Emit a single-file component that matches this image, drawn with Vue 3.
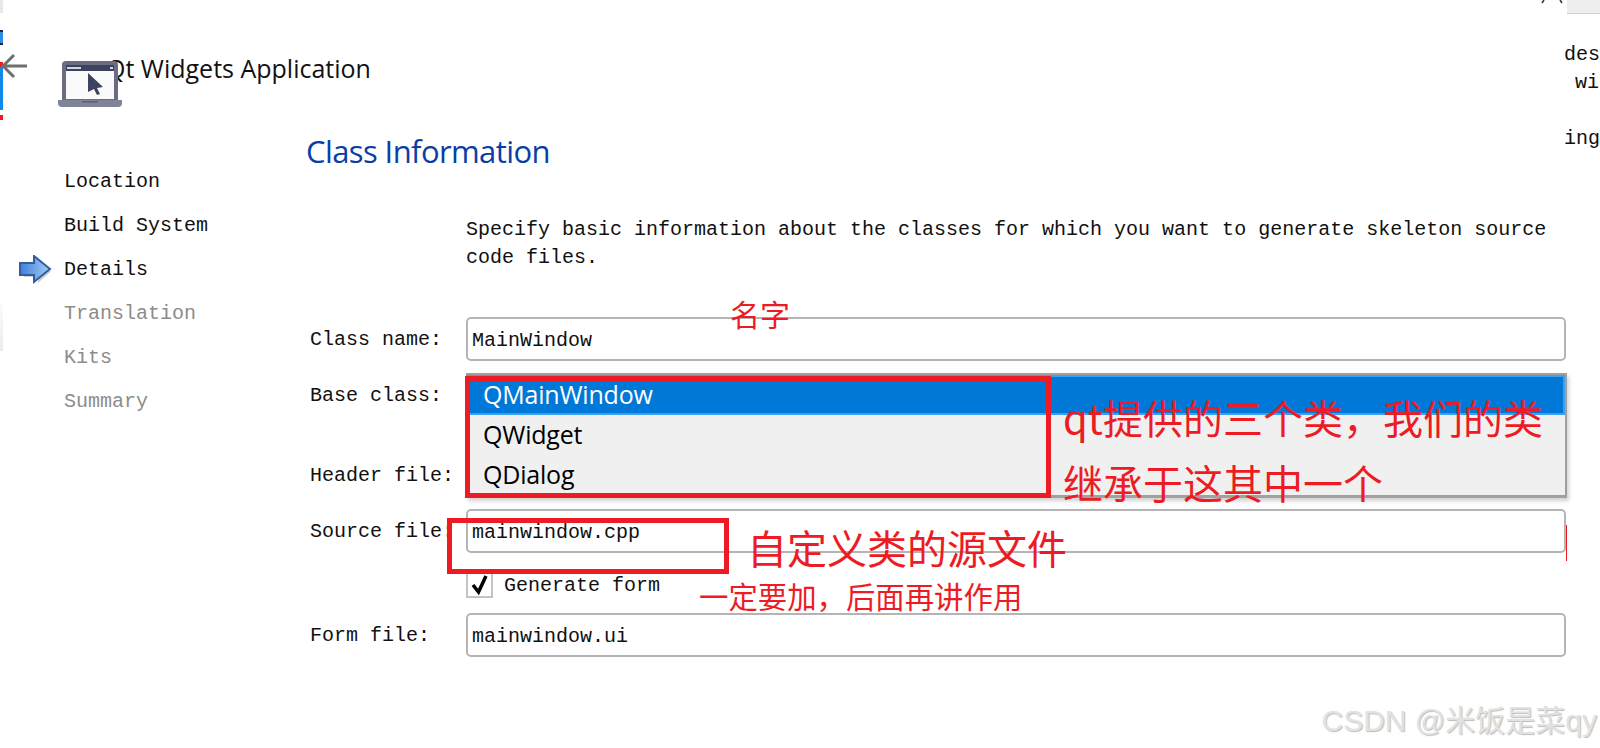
<script setup>
const steps = [
  { label: 'Location', state: 'done' },
  { label: 'Build System', state: 'done' },
  { label: 'Details', state: 'current' },
  { label: 'Translation', state: 'todo' },
  { label: 'Kits', state: 'todo' },
  { label: 'Summary', state: 'todo' },
]
const options = ['QMainWindow', 'QWidget', 'QDialog']
</script>

<template>
  <div class="page">
    <div class="edge-left">
      <i class="edge-gray"></i>
      <i class="edge-dark"></i>
      <i class="edge-blue"></i>
      <i class="edge-box"></i>
    </div>
    <div class="edge-right">
      <svg class="edge-ticks" width="22" height="4" viewBox="0 0 22 4" fill="none" stroke="#333" stroke-width="1.500">
        <path d="M1 3L3 0M19 0L21 3" />
      </svg>
      <i class="edge-bar"></i>
      <span class="edge-text t1">des</span>
      <span class="edge-text t2">wi</span>
      <span class="edge-text t3">ing</span>
    </div>
    <svg class="back" width="26" height="26" viewBox="0 0 26 26" fill="none" stroke="#6e6e6e" stroke-width="3">
      <path d="M2 13H26M13 2L2 13L13 24" />
    </svg>

    <header class="head">
      <h1 class="app-title">Qt Widgets Application</h1>
      <svg class="laptop" width="64" height="46" viewBox="0 0 64 46">
        <path d="M8 0H56a4 4 0 0 1 4 4V40H4V4a4 4 0 0 1 4-4Z" fill="#686d81" />
        <path d="M0 39H64V42a4 4 0 0 1-4 4H4a4 4 0 0 1-4-4Z" fill="#7f8397" />
        <rect x="8" y="5" width="48" height="33" fill="#fafafa" />
        <rect x="8" y="4" width="48" height="6" fill="#3d4260" />
        <rect x="9" y="6" width="14" height="2" fill="#d5d7de" />
        <rect x="52" y="6" width="3" height="2" fill="#d5d7de" />
        <path d="M30 12L45 26L39 27L42 33L39 34L36 28L30 31Z" fill="#3d4260" />
        <rect x="24" y="40" width="16" height="1.500" fill="#5d6176" />
      </svg>
    </header>

    <div class="body">
      <nav class="steps">
        <div v-for="s in steps" :key="s.label" class="step" :class="s.state">
          <svg v-if="s.state === 'current'" class="step-arrow" width="34" height="30" viewBox="0 0 34 30">
            <defs>
              <linearGradient id="arrowFill" x1="0" y1="0" x2="1" y2="0">
                <stop offset="0" stop-color="#3f80d8" />
                <stop offset="1" stop-color="#a6cbf5" />
              </linearGradient>
            </defs>
            <path d="M3 9H17V3L30 14.500L17 26V20H3Z" fill="#cfcfcf" transform="translate(2 2)" />
            <path d="M1 8H15V1L31 14L15 27V20H1Z" fill="url(#arrowFill)" stroke="#2f5f9f" stroke-width="2" />
          </svg>
          {{ s.label }}
        </div>
      </nav>

      <main class="content">
        <h2 class="section">Class Information</h2>
        <p class="intro">Specify basic information about the classes for which you want to generate skeleton source code files.</p>

        <div class="form">
          <label class="lbl r-name">Class name:</label>
          <div class="field r-name">MainWindow</div>

          <label class="lbl r-base">Base class:</label>

          <label class="lbl r-header">Header file:</label>

          <label class="lbl r-source">Source file:</label>
          <div class="field r-source">mainwindow.cpp</div>

          <div class="check-row r-check">
            <span class="check">
              <svg width="20" height="20" viewBox="0 0 20 20" fill="none" stroke="#000" stroke-width="3.500">
                <path d="M3 10L8.500 17L16 1" />
              </svg>
            </span>
            <span>Generate form</span>
          </div>

          <label class="lbl r-form">Form file:</label>
          <div class="field r-form">mainwindow.ui</div>

          <div class="popup">
            <div
              v-for="(o, i) in options"
              :key="o"
              class="opt"
              :class="{ sel: i === 0 }"
            >{{ o }}</div>
          </div>
        </div>
      </main>
    </div>

    <div class="note n-name">名字</div>
    <div class="note n-qt">qt提供的三个类，我们的类</div>
    <div class="note n-inherit">继承于这其中一个</div>
    <div class="note n-src">自定义类的源文件</div>
    <div class="note n-form">一定要加，后面再讲作用</div>
    <div class="mark m-classes"></div>
    <div class="mark m-source"></div>
    <i class="red-tick"></i>

    <div class="watermark">CSDN @米饭是菜qy</div>
  </div>
</template>

<style>
html, body { margin: 0; background: #fff; }
</style>

<style scoped>
.page {
  position: relative;
  width: 1600px;
  height: 748px;
  overflow: hidden;
  background: #fff;
  font-family: "Liberation Mono", "Noto Sans CJK SC", monospace;
  font-size: 20px;
  color: #111;
}

.head {
  position: relative;
  height: 130px;
  padding-left: 58px;
  box-sizing: border-box;
  display: flex;
  align-items: flex-start;
}
.app-title {
  margin: 50px 0 0 48px;
  font: 400 25px/36px "Open Sans", sans-serif;
  color: #111;
}
.laptop { position: absolute; left: 58px; top: 61px; }

.body { display: flex; }
.steps {
  width: 306px;
  flex: none;
  box-sizing: border-box;
  padding: 30px 0 0 64px;
}
.step {
  position: relative;
  height: 44px;
  line-height: 44px;
}
.step.todo { color: #8c8c8c; }
.step-arrow { position: absolute; left: -45px; top: 7px; }

.content { flex: 1; min-width: 0; padding-right: 34px; }
.section {
  margin: 0;
  font: 400 31px/42px "Open Sans", sans-serif;
  color: #0a3ea6;
  letter-spacing: -0.6px;
}
.intro {
  margin: 44px 0 0 160px;
  width: 1090px;
  line-height: 28px;
}

.form {
  position: relative;
  margin-top: 45px;
  display: grid;
  grid-template-columns: 160px 1fr;
  grid-template-rows: 44px 57px 80px 55px 60px 44px;
}
.lbl {
  grid-column: 1;
  align-self: end;
  padding-left: 4px;
  padding-top: 2px;
  box-sizing: border-box;
  height: 44px;
  line-height: 42px;
  white-space: pre;
}
.lbl.r-base, .lbl.r-header { padding-top: 1px; }
.r-name { grid-row: 1; }
.r-base { grid-row: 2; }
.r-header { grid-row: 3; }
.r-source { grid-row: 4; }
.r-check { grid-row: 5; }
.r-form { grid-row: 6; }

.field {
  grid-column: 2;
  align-self: end;
  box-sizing: border-box;
  height: 44px;
  border: 2px solid #b4b4b4;
  border-radius: 5px;
  padding-left: 4px;
  line-height: 44px;
  background: #fff;
}

.popup {
  position: absolute;
  left: 160px;
  right: -1px;
  top: 56px;
  box-sizing: border-box;
  border-top: 2px solid #a0a0a0;
  border-right: 2px solid #a0a0a0;
  border-bottom: 3px solid #a0a0a0;
  background: #f0f0f0;
  box-shadow: 2px 3px 4px rgba(0, 0, 0, 0.18);
  font: 400 25px/38px "Open Sans", sans-serif;
  color: #000;
}
.opt { padding-left: 17px; height: 40px; letter-spacing: -0.2px; }
.opt.sel {
  background: #0078d7;
  color: #fff;
  box-shadow: inset 0 -2px 0 #3aa0f2, inset -2px 0 0 #3aa0f2, inset 0 2px 0 #3aa0f2;
}

.check-row {
  grid-column: 2;
  display: flex;
  align-items: center;
  gap: 11px;
  align-self: start;
  height: 36px;
  margin-top: 14px;
}
.check {
  box-sizing: border-box;
  width: 27px;
  height: 26px;
  border: 2px solid #c4c4c4;
  display: flex;
  align-items: center;
  justify-content: center;
}

.note {
  position: absolute;
  font-family: "Noto Sans CJK SC", sans-serif;
  color: #ed1c24;
  white-space: nowrap;
  line-height: 1;
}
.n-name { left: 730px; top: 298px; font-size: 30px; }
.n-qt { left: 1063px; top: 397px; font-size: 40px; }
.n-inherit { left: 1063px; top: 462px; font-size: 40px; }
.n-src { left: 747px; top: 527px; font-size: 40px; }
.n-form { left: 699px; top: 581px; font-size: 29.400px; }

.mark {
  position: absolute;
  box-sizing: border-box;
  border: 5px solid #ed1c24;
}
.m-classes { left: 465px; top: 376px; width: 586px; height: 122px; }
.m-source { left: 447px; top: 518px; width: 282px; height: 56px; }
.red-tick {
  position: absolute;
  left: 1566px;
  top: 525px;
  width: 1px;
  height: 36px;
  background: #ed1c24;
}

.watermark {
  position: absolute;
  right: 3px;
  top: 703px;
  font: 400 30px/36px "Liberation Sans", "Noto Sans CJK SC", sans-serif;
  color: #e2e2e2;
  text-shadow: 1px 1px 1px #bdbdbd, -1px -1px 0 #fff;
  white-space: nowrap;
}

.edge-left i { position: absolute; left: 0; width: 3px; display: block; }
.edge-gray { top: 0; height: 13px; background: #e8e8e8; }
.edge-dark {
  top: 30px;
  height: 15px;
  background: linear-gradient(#1a2a4a 0 2px, #2f8ae0 2px 13px, #1a2a4a 13px);
}
.edge-blue {
  top: 62px;
  height: 58px;
  background: linear-gradient(#ed1c24 0 5px, #1089e8 5px 48px, #fff 48px 53px, #ed1c24 53px);
}
.edge-box { top: 303px; height: 48px; background: linear-gradient(#fafafa, #ececec); }
.back { position: absolute; left: 1px; top: 53px; }

.edge-ticks { position: absolute; left: 1541px; top: 0; }
.edge-bar {
  position: absolute;
  left: 1567px;
  top: 0;
  width: 33px;
  height: 13px;
  background: #eeeeee;
  border-bottom: 1px solid #cfcfcf;
  display: block;
}
.edge-text {
  position: absolute;
  white-space: pre;
  line-height: 28px;
  font-family: "Liberation Mono", monospace;
}
.t1 { left: 1564px; top: 41px; }
.t2 { left: 1575px; top: 69px; }
.t3 { left: 1564px; top: 125px; }
</style>
